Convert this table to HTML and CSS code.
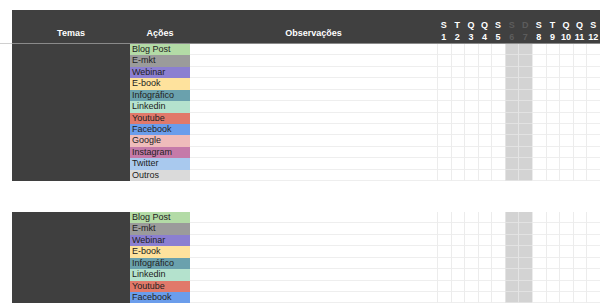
FILE: index.html
```html
<!DOCTYPE html>
<html lang="pt">
<head>
<meta charset="utf-8">
<title>Calendário editorial</title>
<link rel="stylesheet" href="styles.css">
</head>
<body>
<div class="sheet">
  <div class="hdr">
    <div class="h-cell h-temas">Temas</div>
    <div class="h-cell h-acoes">Ações</div>
    <div class="h-cell h-obs">Observações</div>
    <div class="h-day"><span>S</span><span>1</span></div>
    <div class="h-day"><span>T</span><span>2</span></div>
    <div class="h-day"><span>Q</span><span>3</span></div>
    <div class="h-day"><span>Q</span><span>4</span></div>
    <div class="h-day"><span>S</span><span>5</span></div>
    <div class="h-day wk"><span>S</span><span>6</span></div>
    <div class="h-day wk"><span>D</span><span>7</span></div>
    <div class="h-day"><span>S</span><span>8</span></div>
    <div class="h-day"><span>T</span><span>9</span></div>
    <div class="h-day"><span>Q</span><span>10</span></div>
    <div class="h-day"><span>Q</span><span>11</span></div>
    <div class="h-day"><span>S</span><span>12</span></div>
  </div>
  <div class="hdr-line"></div>

  <div class="block">
    <div class="temas"></div>
    <div class="acoes">
      <div class="a blog">Blog Post</div>
      <div class="a emkt">E-mkt</div>
      <div class="a webinar">Webinar</div>
      <div class="a ebook">E-book</div>
      <div class="a info">Infográfico</div>
      <div class="a linkedin">Linkedin</div>
      <div class="a youtube">Youtube</div>
      <div class="a facebook">Facebook</div>
      <div class="a google">Google</div>
      <div class="a instagram">Instagram</div>
      <div class="a twitter">Twitter</div>
      <div class="a outros">Outros</div>
    </div>
    <div class="obs"></div>
    <div class="days">
      <div class="d"></div><div class="d"></div><div class="d"></div><div class="d"></div><div class="d"></div>
      <div class="d wk"></div><div class="d wk"></div>
      <div class="d"></div><div class="d"></div><div class="d"></div><div class="d"></div><div class="d"></div>
    </div>
  </div>

  <div class="block second">
    <div class="temas"></div>
    <div class="acoes">
      <div class="a blog">Blog Post</div>
      <div class="a emkt">E-mkt</div>
      <div class="a webinar">Webinar</div>
      <div class="a ebook">E-book</div>
      <div class="a info">Infográfico</div>
      <div class="a linkedin">Linkedin</div>
      <div class="a youtube">Youtube</div>
      <div class="a facebook">Facebook</div>
      <div class="a google">Google</div>
      <div class="a instagram">Instagram</div>
      <div class="a twitter">Twitter</div>
      <div class="a outros">Outros</div>
    </div>
    <div class="obs"></div>
    <div class="days">
      <div class="d"></div><div class="d"></div><div class="d"></div><div class="d"></div><div class="d"></div>
      <div class="d wk"></div><div class="d wk"></div>
      <div class="d"></div><div class="d"></div><div class="d"></div><div class="d"></div><div class="d"></div>
    </div>
  </div>
</div>
</body>
</html>
```
FILE: styles.css
```css
* { box-sizing: border-box; }
html, body { margin: 0; padding: 0; background: #fff; overflow: hidden; }
body { font-family: "Liberation Sans", Arial, sans-serif; font-size: 9px; color: #222; }

.sheet { padding-top: 10px; width: 600px; }

.hdr {
  margin-left: 12px;
  height: 33px;
  background: #404040;
  display: grid;
  grid-template-columns: 118px 60px 247px repeat(12, 1fr);
  color: #fff;
  font-weight: bold;
}
.h-cell {
  display: flex;
  align-items: flex-end;
  justify-content: center;
  line-height: 12px;
  padding-bottom: 4px;
}
.h-day {
  display: flex;
  flex-direction: column;
  justify-content: flex-end;
  align-items: center;
  line-height: 12px;
  padding-bottom: 0;
}
.h-day.wk { color: #5c5c5c; }

.hdr-line {
  height: 1px;
  background: linear-gradient(to right, #d0d0d0 12px, #8a8a8a 12px);
}

.block {
  margin-left: 12px;
  display: grid;
  grid-template-columns: 118px 60px 247px 1fr;
  height: 137px;
}
.block.second { margin-top: 31px; }

.temas { background: #3f3f3f; }

.acoes {
  display: grid;
  grid-template-rows: repeat(12, minmax(0, 1fr));
}
.a {
  min-height: 0;
  overflow: hidden;
  padding-left: 2px;
  line-height: 11px;
  white-space: nowrap;
  color: #222;
}
.blog { background: #b3dba6; }
.emkt { background: #9b9b9b; }
.webinar { background: #8b7fd1; }
.ebook { background: #fee29d; }
.info { background: #6aa1ad; }
.linkedin { background: #b4e2cd; }
.youtube { background: #e1796a; }
.facebook { background: #6b9deb; }
.google { background: #efbcbb; }
.instagram { background: #c57aa9; }
.twitter { background: #a9c9ee; }
.outros { background: #dadada; }

.obs {
  background-image: repeating-linear-gradient(to bottom, transparent 0, transparent 10.42px, #eeeeee 10.42px, #eeeeee 11.42px);
}

.days { display: grid; grid-template-columns: repeat(12, 1fr); }
.d {
  border-left: 1px solid #ececec;
  background-image: repeating-linear-gradient(to bottom, transparent 0, transparent 10.42px, #eeeeee 10.42px, #eeeeee 11.42px);
}
.d.wk {
  background-color: #d3d3d3;
  border-left: 1px solid #e4e4e4;
  background-image: repeating-linear-gradient(to bottom, transparent 0, transparent 10.42px, #e2e2e2 10.42px, #e2e2e2 11.42px);
}
```
